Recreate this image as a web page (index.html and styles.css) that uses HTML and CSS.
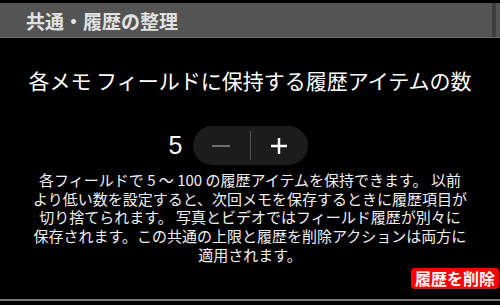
FILE: index.html
```html
<!DOCTYPE html>
<html lang="ja">
<head>
<meta charset="utf-8">
<link rel="stylesheet" href="styles.css">
</head>
<body>
<div class="screen">
  <div class="header">
    <span class="header-title">共通・履歴の整理</span>
    <span class="header-edge"></span>
  </div>
  <div class="title">各メモ フィールドに保持する履歴アイテムの数</div>
  <div class="stepper-row">
    <span class="value">5</span>
    <div class="stepper">
      <span class="step minus"><svg width="20" height="20" viewBox="0 0 20 20"><path d="M1 10H19" stroke="#6c6c6c" stroke-width="2"/></svg></span>
      <span class="divider"></span>
      <span class="step plus"><svg width="18" height="18" viewBox="0 0 18 18"><path d="M1 9H17M9 1V17" stroke="#ffffff" stroke-width="2.4"/></svg></span>
    </div>
    <span class="spacer"></span>
  </div>
  <p class="desc">各フィールドで 5 ～ 100 の履歴アイテムを保持できます。 以前<br>より低い数を設定すると、次回メモを保存するときに履歴項目が<br>切り捨てられます。 写真とビデオではフィールド履歴が別々に<br>保存されます。この共通の上限と履歴を削除アクションは両方に<br>適用されます。</p>
  <div class="footer">
    <span class="delete">履歴を削除</span>
  </div>
  <div class="bottom-line"></div>
</div>
</body>
</html>
```

FILE: styles.css
```css
html, body {
  margin: 0;
  padding: 0;
  background: #000;
}
body {
  width: 500px;
  height: 305px;
  overflow: hidden;
  font-family: "Noto Sans CJK JP", "Noto Sans", sans-serif;
  color: #fff;
}
.screen {
  display: flex;
  flex-direction: column;
  height: 305px;
}
.header {
  margin-top: 3px;
  height: 34px;
  background: #545454;
  border-bottom: 1px solid #6a6a6a;
  display: flex;
  align-items: stretch;
  padding-left: 26px;
}
.header-title {
  align-self: center;
  font-size: 19px;
  font-weight: 700;
  color: #e2e2e2;
  line-height: 1;
}
.header-edge {
  margin-left: auto;
  margin-right: 4px;
  width: 4px;
  background: #3e3e3e;
}
.title {
  margin-top: 29px;
  text-align: center;
  font-size: 21px;
  line-height: 26px;
  color: #fff;
}
.stepper-row {
  margin-top: 33px;
  display: grid;
  grid-template-columns: 1fr auto 1fr;
  align-items: center;
  column-gap: 10px;
}
.value {
  justify-self: end;
  font-family: "Liberation Sans", sans-serif;
  font-size: 25px;
  line-height: 1;
  color: #fff;
}
.stepper {
  width: 115px;
  height: 39px;
  border-radius: 20px;
  background: #1c1c1c;
  display: flex;
  align-items: center;
}
.step {
  flex: 1;
  display: flex;
  justify-content: center;
  align-items: center;
}
.step svg { display: block; }
.divider {
  width: 1px;
  height: 29px;
  background: #555;
}
.desc {
  margin: 6px 0 0;
  text-align: center;
  font-size: 15px;
  line-height: 18.7px;
  color: #f0f0f0;
  white-space: nowrap;
}
.footer {
  margin-top: 3px;
  display: flex;
  justify-content: flex-end;
  padding-right: 1px;
}
.delete {
  background: #ff0000;
  color: #fff;
  font-size: 16px;
  font-weight: 700;
  line-height: 21px;
  padding: 0 4px;
  border-radius: 4px;
}
.bottom-line {
  margin-top: 10px;
  height: 2px;
  background: #777;
}
```
